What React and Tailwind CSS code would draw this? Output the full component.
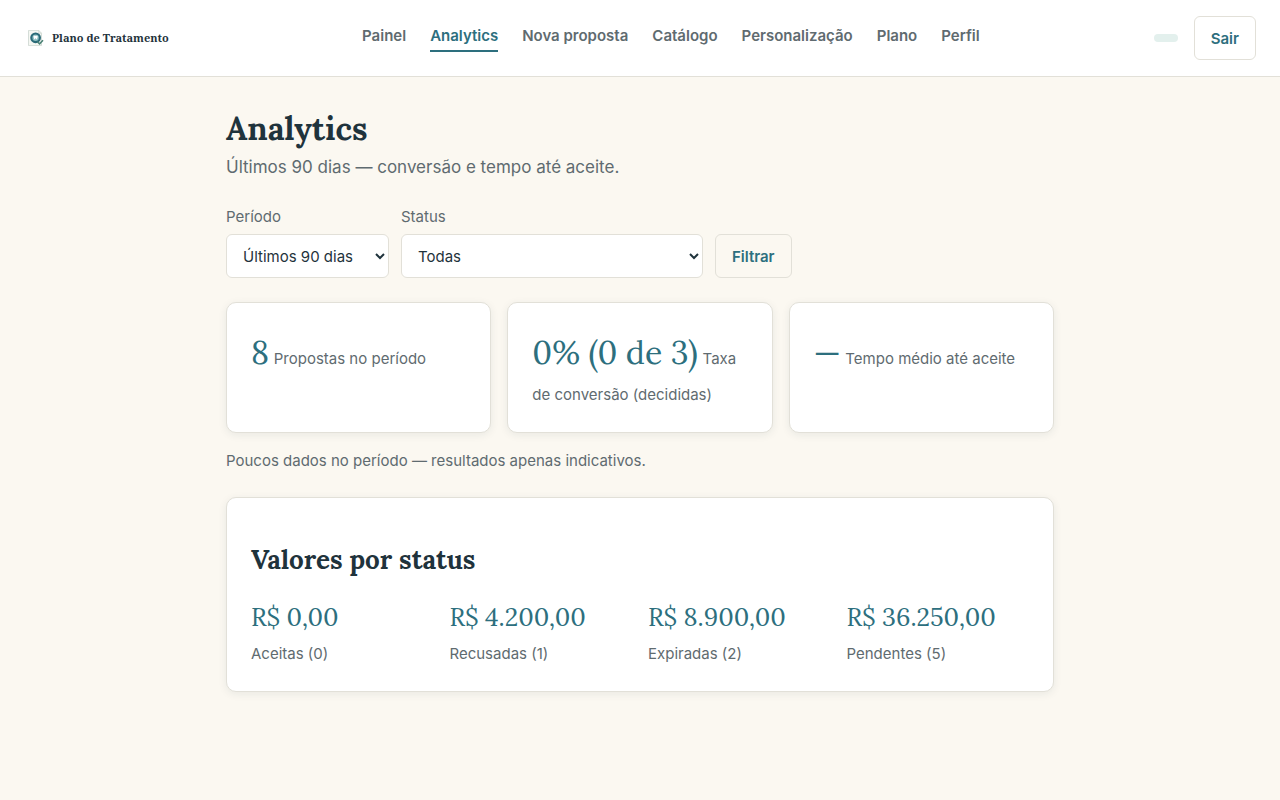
const NAV = ["Painel", "Analytics", "Nova proposta", "Catálogo", "Personalização", "Plano", "Perfil"];

const STATS = [
  { value: "8", label: "Propostas no período" },
  { value: "0% (0 de 3)", label: "Taxa de conversão (decididas)" },
  { value: "—", label: "Tempo médio até aceite" },
];

const VALUES = [
  { value: "R$ 0,00", label: "Aceitas (0)" },
  { value: "R$ 4.200,00", label: "Recusadas (1)" },
  { value: "R$ 8.900,00", label: "Expiradas (2)" },
  { value: "R$ 36.250,00", label: "Pendentes (5)" },
];

const CARD = "rounded-[10px] border border-[#e2e0d8] bg-white shadow-[0_2px_8px_rgba(31,51,60,0.08)]";
const SELECT =
  "h-11 rounded-md border border-[#e2e0d8] bg-white pl-3 text-[15px] text-[#1f333c]";
const BUTTON =
  "h-11 rounded-md border border-[#e2e0d8] px-4 leading-[25px] font-semibold text-[#2d6f7e]";
const SERIF = "font-['Lora','Liberation_Serif',serif]";

function Logo() {
  return (
    <svg className="h-4 w-4" viewBox="0 0 16 16" fill="none" aria-hidden="true">
      <path d="M.5.4h10.3l2.700 2.800v12.400H.5z" fill="#f5f7f2" stroke="#ccd5cf" strokeWidth=".8" />
      <path d="M10.800.4v2.800h2.700" stroke="#ccd5cf" strokeWidth=".8" />
      <circle cx="7.600" cy="7.800" r="4.300" fill="#8fc0c2" stroke="#2a6a78" strokeWidth="2.200" />
      <path d="M5.700 6.100c.6-.7 1.300-.2 1.900-.2s1.300-.5 1.900.2c.5.8-.2 1.700-.4 2.600-.2.900-.7.900-.9.100-.2-.7-1-.7-1.200 0-.2.800-.7.800-.9-.1-.2-.9-.9-1.800-.4-2.600z" fill="#fff" />
      <path d="m9.400 11.700 2.200 2.200 3.400-3.600" stroke="#4b8276" strokeWidth="1.600" />
    </svg>
  );
}

export default function App() {
  return (
    <div className="min-h-screen bg-[#fbf8f1] font-['Inter',sans-serif] text-[15px] text-[#5f6b70]">
      <header className="border-b border-[#e2e0d8] bg-white">
        <div className="flex items-center justify-between px-6 py-4">
          <a href="#" className="flex w-[164px] items-center gap-2 pl-1">
            <Logo />
            <span className="whitespace-nowrap font-['Noto_Serif','Droid_Serif','Liberation_Serif',serif] text-[11px] font-bold text-[#1f333c]">
              Plano de Tratamento
            </span>
          </a>
          <nav className="flex gap-6 font-semibold">
            {NAV.map((item) => (
              <a
                key={item}
                href="#"
                aria-current={item === "Analytics" ? "page" : undefined}
                className={
                  item === "Analytics"
                    ? "border-b-2 border-[#2d6f7e] pb-0.5 leading-6 text-[#2d6f7e]"
                    : "border-b-2 border-transparent pb-0.5 leading-6"
                }
              >
                {item}
              </a>
            ))}
          </nav>
          <div className="flex items-center gap-4">
            <span className="h-2 w-6 rounded-full bg-[#e3f0ed]" />
            <button type="button" className={BUTTON}>
              Sair
            </button>
          </div>
        </div>
      </header>

      <main className="mx-auto max-w-[876px] px-6 pt-8 pb-12">
        <h1 className={`${SERIF} text-[32px] leading-10 font-bold text-[#1f333c]`}>Analytics</h1>
        <p className="mt-1 text-[17px] leading-7">Últimos 90 dias — conversão e tempo até aceite.</p>

        <form className="mt-6 flex flex-wrap items-end gap-3" onSubmit={(e) => e.preventDefault()}>
          <div className="flex flex-col gap-[5px]">
            <label htmlFor="period" className="leading-6">Período</label>
            <select id="period" className={`${SELECT} w-[163px]`} defaultValue="90">
              <option value="30">Últimos 30 dias</option>
              <option value="90">Últimos 90 dias</option>
            </select>
          </div>
          <div className="flex flex-col gap-[5px]">
            <label htmlFor="status" className="leading-6">Status</label>
            <select id="status" className={`${SELECT} w-[302px]`}>
              <option>Todas</option>
              <option>Aceitas</option>
              <option>Recusadas</option>
              <option>Expiradas</option>
              <option>Pendentes</option>
            </select>
          </div>
          <button type="submit" className={BUTTON}>
            Filtrar
          </button>
        </form>

        <section className="mt-6 grid grid-cols-3 gap-4">
          {STATS.map((s) => (
            <div key={s.label} className={`${CARD} px-6 pt-6 pb-[21px]`}>
              <p className="text-[17px] leading-8">
                <span className={`${SERIF} text-[32px] leading-[51px] text-[#2d6f7e]`}>{s.value}</span>{" "}
                <span className="text-[15px]">{s.label}</span>
              </p>
            </div>
          ))}
        </section>

        <p className="mt-4 leading-6">Poucos dados no período — resultados apenas indicativos.</p>

        <section className={`${CARD} mt-6 px-6 pt-11 pb-6`}>
          <h2 className={`${SERIF} text-[26px] leading-9 font-bold text-[#1f333c]`}>Valores por status</h2>
          <div className="mt-4 grid grid-cols-4 gap-4">
            {VALUES.map((v) => (
              <div key={v.label}>
                <p className={`${SERIF} text-[25px] leading-[46px] text-[#2d6f7e]`}>{v.value}</p>
                <p className="leading-[27px]">{v.label}</p>
              </div>
            ))}
          </div>
        </section>
      </main>
    </div>
  );
}
